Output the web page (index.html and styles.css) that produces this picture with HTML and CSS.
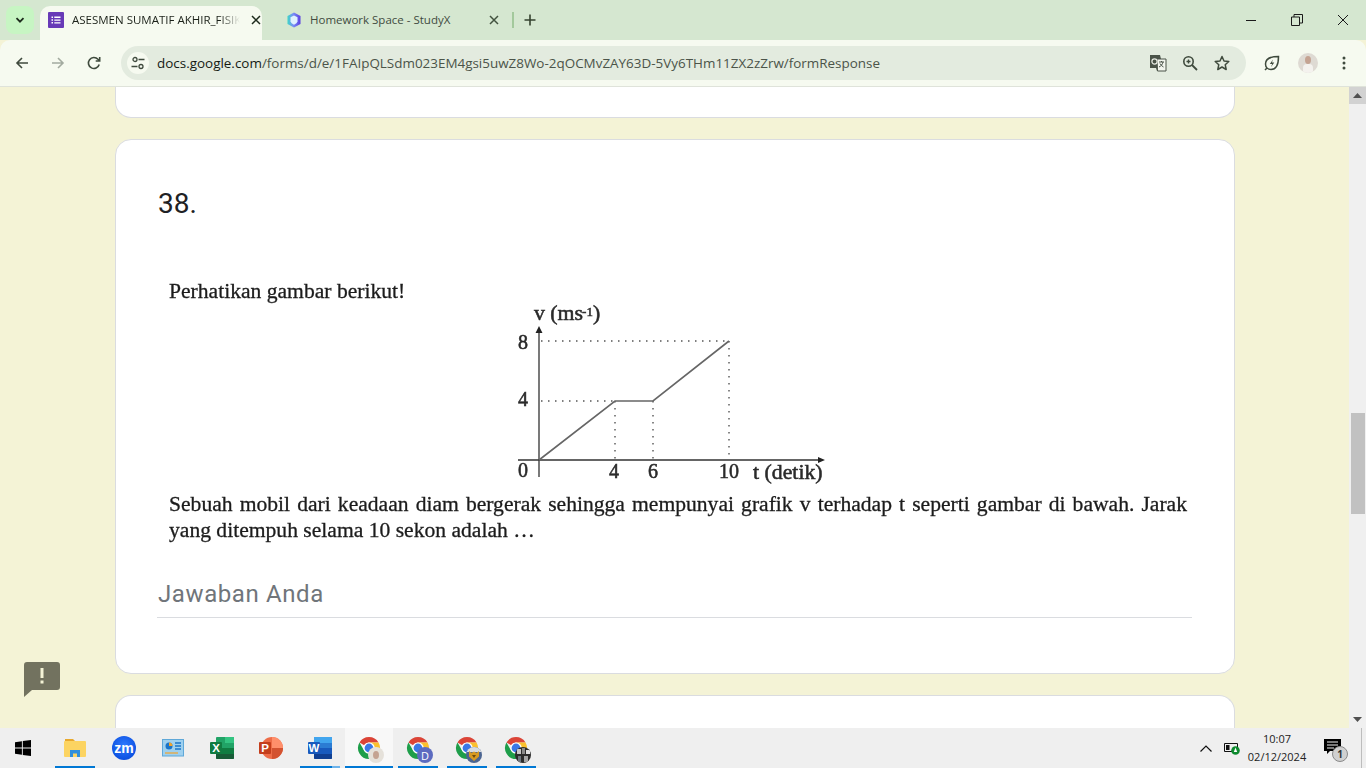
FILE: index.html
```html
<!DOCTYPE html>
<html lang="id">
<head>
<meta charset="utf-8">
<title>ASESMEN SUMATIF AKHIR_FISIKA</title>
<link rel="stylesheet" href="styles.css">
</head>
<body>
<svg class="defs" width="0" height="0">
  <symbol id="chrome" viewBox="0 0 24 24">
    <path fill="#db4437" d="M2.47 6.5A11 11 0 0 1 21.53 6.5H12A5.5 5.5 0 0 0 7.2 9.2z"/>
    <path fill="#fbc02d" d="M21.53 6.5A11 11 0 0 1 12 23L16.8 14.8A5.5 5.5 0 0 0 17.5 12 5.5 5.5 0 0 0 12 6.5z"/>
    <path fill="#1e9e4a" d="M12 23A11 11 0 0 1 2.47 6.5L7.2 14.8A5.5 5.5 0 0 0 12 17.5z"/>
    <circle cx="12" cy="12" r="5.6" fill="#fff"/>
    <circle cx="12" cy="12" r="4.4" fill="#3b78e7"/>
  </symbol>
</svg>

<header class="tabstrip">
  <button class="tab-search"><svg width="12" height="12" viewBox="0 0 12 12"><path d="M2.5 4.2 6 7.7l3.500-3.500" fill="none" stroke="#1d2a1c" stroke-width="1.800"/></svg></button>
  <div class="tab tab-active">
    <svg class="favicon" width="16" height="16" viewBox="0 0 16 16"><rect width="16" height="16" rx="1" fill="#673ab7"/><path d="M3.500 4.500h1.500v1.500H3.500zM3.500 7.300h1.500v1.500H3.500zM3.500 10.100h1.500v1.500H3.500zM6.300 4.600h6.200v1.300H6.300zM6.300 7.400h6.200v1.300H6.300zM6.300 10.200h6.200v1.300H6.300z" fill="#fff"/></svg>
    <span class="tab-title fade">ASESMEN SUMATIF AKHIR_FISIKA</span>
    <svg class="tab-close" width="10" height="10" viewBox="0 0 10 10"><path d="M1 1l8 8M9 1 1 9" stroke="#1d2a1c" stroke-width="1.500"/></svg>
  </div>
  <div class="tab tab-idle">
    <svg class="favicon" width="14" height="16" viewBox="0 0 14 16"><defs><linearGradient id="sx" x1="0" y1="0" x2="1" y2="0"><stop offset="0" stop-color="#3ed6c8"/><stop offset=".45" stop-color="#7a8cf6"/><stop offset="1" stop-color="#5a3fe0"/></linearGradient></defs><path d="M7 .5 13.500 4v8L7 15.500.5 12V4z" fill="url(#sx)"/><path d="M7 3.500 10.500 5.200v4.300Q10 11.500 7 12.700 4 11.500 3.500 9.500V5.200z" fill="#dff0ff"/></svg>
    <span class="tab-title tab-title-idle">Homework Space - StudyX</span>
    <svg class="tab-close" width="10" height="10" viewBox="0 0 10 10"><path d="M1 1l8 8M9 1 1 9" stroke="#42523f" stroke-width="1.500"/></svg>
  </div>
  <span class="tab-sep"></span>
  <button class="tab-new"><svg width="12" height="12" viewBox="0 0 12 12"><path d="M6 .5v11M.5 6h11" stroke="#35432f" stroke-width="1.600"/></svg></button>
  <div class="win-controls">
    <svg width="12" height="12" viewBox="0 0 12 12"><path d="M1 6.500h10" stroke="#1a1a1a" stroke-width="1"/></svg>
    <svg width="12" height="12" viewBox="0 0 12 12"><path d="M.5 3h8v8.500h-8zM3 3V.5h8.500V9H8.500" fill="none" stroke="#1a1a1a" stroke-width="1"/></svg>
    <svg width="12" height="12" viewBox="0 0 12 12"><path d="M1 1l10 10M11 1 1 11" stroke="#1a1a1a" stroke-width="1"/></svg>
  </div>
</header>

<nav class="toolbar">
  <svg class="tb-btn" width="16" height="16" viewBox="0 0 16 16"><path d="M14 8H3M8 3 3 8l5 5" fill="none" stroke="#3f4a3d" stroke-width="1.600"/></svg>
  <svg class="tb-btn" width="16" height="16" viewBox="0 0 16 16"><path d="M2 8h11M8 3l5 5-5 5" fill="none" stroke="#a3aba0" stroke-width="1.600"/></svg>
  <svg class="tb-btn" width="16" height="16" viewBox="0 0 16 16"><path d="M13.200 9.500A5.500 5.500 0 1 1 12 4.300L13.500 5.800M13.700 2v4h-4" fill="none" stroke="#3f4a3d" stroke-width="1.600"/></svg>
  <div class="omnibox">
    <span class="site-chip"><svg width="14" height="14" viewBox="0 0 14 14"><circle cx="4" cy="3.500" r="2" fill="none" stroke="#3f4a3d" stroke-width="1.300"/><path d="M7.500 3.500h6M.5 10.500h6" stroke="#3f4a3d" stroke-width="1.300"/><circle cx="10" cy="10.500" r="2" fill="none" stroke="#3f4a3d" stroke-width="1.300"/></svg></span>
    <span class="url"><span class="url-host">docs.google.com</span>/forms/d/e/1FAIpQLSdm023EM4gsi5uwZ8Wo-2qOCMvZAY63D-5Vy6THm11ZX2zZrw/formResponse</span>
    <svg class="omni-icon" width="18" height="18" viewBox="0 0 18 18"><path d="M1 1h10l1 4h5v12H8l-1-3H1z" fill="#4a5348"/><path d="M8 5h9v12H8.500z" fill="#f2f5ee" stroke="#4a5348"/><circle cx="5.500" cy="7.500" r="2.600" fill="none" stroke="#e7ebe2" stroke-width="1.200"/><path d="M10 8h5M12.500 7v1M14 8c-.5 2.500-2 4-4 5M11 9.500c.7 1.500 2 2.700 3.500 3.500" fill="none" stroke="#4a5348"/></svg>
    <svg class="omni-icon" width="16" height="16" viewBox="0 0 16 16"><circle cx="6.500" cy="6.500" r="4.700" fill="none" stroke="#3f4a3d" stroke-width="1.600"/><path d="M10 10l5 5" stroke="#3f4a3d" stroke-width="1.800"/><path d="M4.500 6.500h4M6.500 4.500v4" stroke="#3f4a3d" stroke-width="1.400"/></svg>
    <svg class="omni-icon omni-star" width="16" height="16" viewBox="0 0 16 16"><path d="M8 1.500 10 6l4.800.5-3.600 3.200 1 4.800L8 12l-4.200 2.500 1-4.800L1.200 6.500 6 6z" fill="none" stroke="#3f4a3d" stroke-width="1.500" stroke-linejoin="round"/></svg>
  </div>
  <svg class="tb-ext" width="16" height="16" viewBox="0 0 16 16"><path d="M14.500 1.500C8 1.500 1.500 2.500 1.500 9c0 3.500 2.500 5.500 5.500 5.500 5.500 0 7.500-6 7.500-13zM1 15l2.500-2.500" fill="none" stroke="#3f4a3d" stroke-width="1.500"/><path d="M9 4.500 5.800 9h2.400L7 12l3.300-4.500H7.900z" fill="#3f4a3d"/></svg>
  <span class="avatar"><span class="avatar-head"></span><span class="avatar-body"></span></span>
  <svg class="tb-menu" width="4" height="14" viewBox="0 0 4 14"><circle cx="2" cy="2" r="1.500" fill="#3f4a3d"/><circle cx="2" cy="7" r="1.500" fill="#3f4a3d"/><circle cx="2" cy="12" r="1.500" fill="#3f4a3d"/></svg>
</nav>

<div class="viewport">
  <main class="page">
    <section class="card card-prev"></section>
    <section class="card card-question">
      <h2 class="q-number">38.</h2>
      <div class="q-image">
        <p class="q-text q-first">Perhatikan gambar berikut!</p>
        <svg class="chart" width="340" height="192" viewBox="500 295 340 192">
          <g class="chart-dots">
            <path d="M541 341H729M729 341V460M541 401H615M615 401V460M653 401V460"/>
          </g>
          <path class="chart-axis" d="M539 330V477M518 460H820"/>
          <path class="chart-head" d="M539 326l-3.500 7h7zM825 460l-7-3v6z"/>
          <path class="chart-line" d="M539 460 615 401H653L729 341"/>
          <text class="chart-label chart-wide" x="534" y="320">v (ms<tspan class="chart-sup" dx="-1" dy="-4">-1</tspan><tspan dy="4">)</tspan></text>
          <text class="chart-label" x="518" y="349">8</text>
          <text class="chart-label" x="518" y="406">4</text>
          <text class="chart-label" x="518" y="477">0</text>
          <text class="chart-label" x="609" y="478">4</text>
          <text class="chart-label" x="648" y="478">6</text>
          <text class="chart-label" x="719" y="478">10</text>
          <text class="chart-label chart-wide" x="753" y="479">t (detik)</text>
        </svg>
        <p class="q-text q-long">Sebuah mobil dari keadaan diam bergerak sehingga mempunyai grafik v terhadap t seperti gambar di bawah. Jarak yang ditempuh selama 10 sekon adalah …</p>
      </div>
      <div class="answer"><span class="answer-text">Jawaban Anda</span></div>
    </section>
    <section class="card card-next"></section>
    <button class="feedback"><svg width="36" height="36" viewBox="0 0 36 36"><path d="M3 0H33a3 3 0 0 1 3 3V25a3 3 0 0 1-3 3H8L0 35V3a3 3 0 0 1 3-3z" fill="#72725f"/><path d="M16.500 6h3v10h-3zM16.500 18.500h3v3h-3z" fill="#f4f3d6"/></svg></button>
  </main>
  <aside class="scrollbar">
    <span class="sb-up"><svg width="9" height="5" viewBox="0 0 9 5"><path d="M4.500 0 9 5H0z" fill="#505050"/></svg></span>
    <span class="sb-thumb"></span>
    <span class="sb-down"><svg width="9" height="5" viewBox="0 0 9 5"><path d="M4.500 5 9 0H0z" fill="#505050"/></svg></span>
  </aside>
</div>

<footer class="taskbar">
  <span class="start"><svg width="16" height="16" viewBox="0 0 16 16"><path d="M0 2.200 6.900 1.200v6.400H0zM7.800 1.100 16 0v7.600H7.800zM0 8.500h6.900v6.300L0 13.800zM7.800 8.500H16V16l-8.200-1.100z" fill="#000"/></svg></span>
  <span class="task running"><svg width="22" height="20" viewBox="0 0 22 20"><path d="M1 1h8l2 2H1z" fill="#e8a92e"/><rect x="0" y="3" width="22" height="16" rx="1" fill="#fcd462"/><path d="M6 19v-7h10v7h-3v-3.500H9V19z" fill="#2f8fdc"/></svg></span>
  <span class="task"><svg width="24" height="24" viewBox="0 0 24 24"><defs><radialGradient id="zm" cx=".5" cy=".4" r=".6"><stop offset="0" stop-color="#2f7bff"/><stop offset="1" stop-color="#0b4fe0"/></radialGradient></defs><circle cx="12" cy="12" r="12" fill="url(#zm)"/><text class="zoom-mark" x="12" y="16.500" text-anchor="middle">zm</text></svg></span>
  <span class="task"><svg width="22" height="18" viewBox="0 0 22 18"><rect x=".5" y=".5" width="21" height="16.500" fill="#9ed0ef" stroke="#5fa8d8"/><circle cx="7" cy="7" r="3.500" fill="#1b74c8"/><path d="M7 7V3.500A3.500 3.500 0 0 1 10.500 7z" fill="#f3a32a"/><path d="M13 4h6M13 7h6M13 10h6" stroke="#1b74c8" stroke-width="1.400"/><path d="M3 14h13" stroke="#f3a32a" stroke-width="1.200"/></svg></span>
  <span class="task"><svg width="24" height="24" viewBox="0 0 24 24"><rect x="6" y="1" width="18" height="22" rx="1" fill="#21a366"/><path d="M15 1h8a1 1 0 0 1 1 1v5h-9z" fill="#33c481"/><path d="M6 12h18v6H6z" fill="#107c41"/><path d="M6 18h18v4a1 1 0 0 1-1 1H7a1 1 0 0 1-1-1z" fill="#185c37"/><rect x="0" y="6" width="12" height="12" rx="1" fill="#107c41"/><text class="office-mark" x="6" y="16.300" text-anchor="middle">X</text></svg></span>
  <span class="task"><svg width="24" height="24" viewBox="0 0 24 24"><circle cx="13" cy="12" r="11" fill="#ed6c47"/><path d="M13 1a11 11 0 0 1 11 11H13z" fill="#ff8f6b"/><path d="M13 12h11a11 11 0 0 1-11 11z" fill="#d35230"/><rect x="0" y="6" width="12" height="12" rx="1" fill="#c43e1c"/><text class="office-mark" x="6" y="16.300" text-anchor="middle">P</text></svg></span>
  <span class="task running word-task"><svg width="24" height="24" viewBox="0 0 24 24"><rect x="6" y="1" width="18" height="22" rx="1" fill="#2b7cd3"/><path d="M6 1h17a1 1 0 0 1 1 1v5H6z" fill="#41a5ee"/><path d="M6 12h18v6H6z" fill="#185abd"/><path d="M6 18h18v4a1 1 0 0 1-1 1H7a1 1 0 0 1-1-1z" fill="#103f91"/><rect x="0" y="6" width="12" height="12" rx="1" fill="#185abd"/><text class="office-mark" x="6" y="16.300" text-anchor="middle">W</text></svg></span>
  <span class="task chrome-task active running"><svg class="chrome-logo" width="24" height="24"><use href="#chrome"/></svg><span class="chrome-badge badge-self"><span class="badge-self-face"></span></span></span>
  <span class="task chrome-task running"><svg class="chrome-logo" width="24" height="24"><use href="#chrome"/></svg><span class="chrome-badge badge-d">D</span></span>
  <span class="task chrome-task running"><svg class="chrome-logo" width="24" height="24"><use href="#chrome"/></svg><span class="chrome-badge badge-gold"><svg width="16" height="16" viewBox="0 0 16 16"><rect width="16" height="16" fill="#4b6491"/><rect width="16" height="5" fill="#d7dbe0"/><path d="M3 4 5.500 6 8 4.500 10.500 6 13 4v5.500L8 14 3 9.500z" fill="#d69a22"/><path d="M6 8h4L8 11z" fill="#6b4a10"/></svg></span></span>
  <span class="task chrome-task running"><svg class="chrome-logo" width="24" height="24"><use href="#chrome"/></svg><span class="chrome-badge badge-dark"><svg width="16" height="16" viewBox="0 0 16 16"><rect width="16" height="16" fill="#2c2c2c"/><rect x="2" y="2" width="4" height="5" fill="#c9c9c9"/><rect x="7" y="1" width="3" height="6" fill="#8a8a8a"/><rect x="11" y="3" width="4" height="4" fill="#e2e2e2"/><rect x="3" y="9" width="3" height="6" fill="#6e7780"/><rect x="9" y="9" width="4" height="6" fill="#a5a5a5"/></svg></span></span>
  <div class="tray">
    <svg width="12" height="7" viewBox="0 0 12 7"><path d="M.5 6.500 6 1l5.500 5.500" fill="none" stroke="#111" stroke-width="1.200"/></svg>
    <svg class="tray-battery" width="16" height="14" viewBox="0 0 16 14"><path d="M.5 2.500h13v8H.5z" fill="none" stroke="#111"/><rect x="2" y="4" width="3.500" height="5" fill="#111"/><circle cx="11.500" cy="9.500" r="4.300" fill="#0d8a2e"/><path d="M11.500 6.500 9.800 11h3.400z" fill="#fff"/></svg>
    <div class="clock"><span>10:07</span><span>02/12/2024</span></div>
    <span class="notif"><svg width="17" height="15" viewBox="0 0 17 15"><path d="M0 0h17v12H6l-3 3v-3H0z" fill="#000"/><path d="M3 3h11M3 6h11M3 9h7" stroke="#f0f0f0"/></svg><span class="notif-count">1</span></span>
  </div>
  <span class="show-desktop"></span>
</footer>
</body>
</html>
```
FILE: styles.css
```css
* { box-sizing: border-box; }
html, body { margin: 0; padding: 0; }
body {
  width: 1366px;
  height: 768px;
  overflow: hidden;
  display: flex;
  flex-direction: column;
  font-family: "Open Sans", "Liberation Sans", sans-serif;
  background: #f4f3d6;
}
.defs { position: absolute; }
button { border: 0; padding: 0; background: none; display: flex; align-items: center; justify-content: center; }

/* tab strip */
.tabstrip {
  height: 40px;
  flex: none;
  background: #d5e7d0;
  display: flex;
  align-items: flex-end;
  padding-left: 6px;
}
.tab-search {
  width: 28px;
  height: 28px;
  margin-bottom: 6px;
  background: #c7f5c3;
  border-radius: 8px;
}
.tab {
  height: 34px;
  display: flex;
  align-items: center;
  padding-bottom: 6px;
}
.tab-active {
  width: 222px;
  margin-left: 6px;
  padding-left: 8px;
  padding-right: 1px;
  background: #f6faf0;
  border-radius: 10px 10px 0 0;
}
.tab-idle {
  width: 244px;
  padding-left: 25px;
  padding-right: 7px;
}
.favicon { flex: none; }
.tab-title {
  flex: 1;
  min-width: 0;
  margin-left: 8px;
  font-size: 11.500px;
  line-height: 16px;
  white-space: nowrap;
  overflow: hidden;
  color: #1b2119;
}
.tab-title-idle { margin-left: 9px; color: #414b3f; }
.fade { -webkit-mask-image: linear-gradient(to right, #000 88%, transparent); mask-image: linear-gradient(to right, #000 88%, transparent); }
.tab-close { flex: none; }
.tab-active .tab-close { margin-left: 11px; }
.tab-sep { width: 2px; height: 16px; margin: 0 0 12px 6px; background: #a3c99c; }
.tab-new { width: 12px; height: 12px; margin: 0 0 14px 10px; }
.win-controls {
  margin-left: auto;
  width: 138px;
  height: 40px;
  display: flex;
  align-items: center;
  justify-content: space-between;
  padding: 0 17px;
}

/* toolbar */
.toolbar {
  height: 47px;
  flex: none;
  display: flex;
  align-items: center;
  background: #f6faf0;
  border-bottom: 1px solid #dfe3da;
  border-radius: 10px 10px 0 0;
  padding: 0 0 1px 14px;
}
.tb-btn { flex: none; margin-right: 20px; }
.omnibox {
  width: 1125px;
  height: 34px;
  margin-left: -1px;
  display: flex;
  align-items: center;
  padding: 0 16px 0 6px;
  border-radius: 17px;
  background: #e3ebdf;
}
.site-chip {
  width: 22px;
  height: 22px;
  flex: none;
  display: flex;
  align-items: center;
  justify-content: center;
  border-radius: 50%;
  background: #f6faf0;
}
.url {
  flex: 1;
  margin-left: 8px;
  font-size: 13.440px;
  white-space: nowrap;
  color: #4b5449;
}
.url-host { color: #141a13; }
.omni-icon { flex: none; margin-left: 15px; }
.omni-star { margin-left: 16px; }
.tb-ext { flex: none; margin-left: 18px; }
.avatar {
  position: relative;
  width: 20px;
  height: 20px;
  margin-left: 18px;
  flex: none;
  overflow: hidden;
  border-radius: 50%;
  background: #dedad3;
}
.avatar-head { position: absolute; left: 7px; top: 3px; width: 6px; height: 8px; border-radius: 50%; background: #c4a392; }
.avatar-body { position: absolute; left: 5px; top: 11px; width: 10px; height: 10px; border-radius: 4px 4px 0 0; background: #f4f2ee; }
.tb-menu { flex: none; margin-left: 24px; }

/* page */
.viewport {
  flex: 1;
  min-height: 0;
  display: flex;
  overflow: hidden;
}
.page {
  position: relative;
  flex: 1;
  min-width: 0;
  overflow: hidden;
  background: #f4f3d6;
  padding-left: 115px;
}
.card {
  width: 1120px;
  background: #fff;
  border: 1px solid #dadce0;
  border-radius: 16px;
  margin-bottom: 21px;
}
.card-prev {
  height: 31px;
  border-top: 0;
  border-radius: 0 0 16px 16px;
}
.card-question {
  height: 535px;
  padding: 47px 42px 0 41px;
}
.card-next { height: 80px; border-bottom: 0; border-radius: 16px 16px 0 0; }
.q-number {
  margin: 0 0 0 1px;
  height: 34px;
  font: 400 28px/34px Roboto, sans-serif;
  color: #202124;
}
.q-image { margin-top: 57px; padding: 0 5px 0 12px; }
.q-text {
  margin: 0;
  font-family: "Liberation Serif", "Times New Roman", serif;
  font-size: 21.600px;
  line-height: 26px;
  color: #1c1c1c;
  filter: blur(.35px);
  -webkit-text-stroke: .3px #1c1c1c;
}
.q-long { text-align: justify; margin-top: 5px; line-height: 25.500px; }
.chart { display: block; margin: -9px 0 0 331px; filter: blur(.35px); }
.chart-dots path { fill: none; stroke: #555; stroke-width: 1.400; stroke-dasharray: 1.500 5.500; }
.chart-axis { fill: none; stroke: #333; stroke-width: 1.300; }
.chart-head { fill: #222; }
.chart-line { fill: none; stroke: #666; stroke-width: 1.600; }
.chart-label {
  font-family: "Liberation Serif", serif;
  font-size: 20px;
  font-weight: 400;
  fill: #2a2a2a;
  stroke: #2a2a2a;
  stroke-width: .55px;
}
.chart-wide { font-size: 21.800px; }
.chart-sup { font-size: 13px; }
.answer {
  margin-top: 36px;
  height: 39px;
  font: 400 24px/30px Roboto, sans-serif;
  color: #70757a;
  letter-spacing: .6px;
  border-bottom: 1px solid #dadce0;
}
.answer-text { margin-left: 1px; }
.feedback {
  position: absolute;
  left: 24px;
  top: 575px;
  width: 36px;
  height: 36px;
}

/* scrollbar */
.scrollbar {
  width: 17px;
  flex: none;
  display: flex;
  flex-direction: column;
  align-items: center;
  background: #f0f0f0;
}
.sb-up, .sb-down { width: 17px; height: 17px; flex: none; display: flex; align-items: center; justify-content: center; }
.sb-up { background: #d2d2d2; }
.sb-thumb { width: 14px; height: 101px; margin: 309px 0 0 1px; background: #c1c1c1; }
.sb-down { margin-top: auto; }

/* taskbar */
.taskbar {
  position: relative;
  height: 40px;
  flex: none;
  display: flex;
  align-items: stretch;
  background: #efefef;
}
.start { width: 46px; display: flex; align-items: center; justify-content: center; margin-right: 9px; }
.task {
  position: relative;
  width: 40px;
  margin-right: 9px;
  display: flex;
  align-items: center;
  justify-content: center;
}
.task.running::after {
  content: "";
  position: absolute;
  left: 0;
  right: 0;
  bottom: 0;
  height: 2px;
  background: #0078d4;
}
.task.word-task::after { background: linear-gradient(to right, #0078d4 80%, #6db3ea 80%); }
.active { width: 48px; margin: 0 5px 0 -4px; background: #f8f8f8; }
.zoom-mark { font: 700 14px "Liberation Sans", sans-serif; fill: #fff; }
.office-mark { font: 700 11.500px "Liberation Sans", sans-serif; fill: #fff; }
.chrome-logo { overflow: visible; }
.chrome-badge {
  position: absolute;
  left: 50%;
  top: 19px;
  margin-left: -1px;
  width: 16px;
  height: 16px;
  border-radius: 50%;
  display: flex;
  align-items: center;
  justify-content: center;
  overflow: hidden;
}
.badge-self { background: #e5e1da; }
.badge-self-face { width: 6px; height: 8px; border-radius: 50%; background: #c4a392; }
.badge-d { background: #5c6bc0; color: #fff; font: 400 11px "Open Sans", sans-serif; }
.tray {
  position: absolute;
  left: 1200px;
  top: 0;
  bottom: 0;
  display: flex;
  align-items: center;
}
.tray-battery { margin-left: 12px; }
.clock {
  width: 62px;
  margin-left: 6px;
  display: flex;
  flex-direction: column;
  align-items: center;
  font-size: 11px;
  line-height: 18px;
  color: #222;
}
.notif { position: relative; margin-left: 16px; display: flex; margin-top: -3px; }
.notif-count {
  position: absolute;
  left: 8px;
  top: 7px;
  width: 16px;
  height: 16px;
  border-radius: 50%;
  background: #d0d0d0;
  border: 1px solid #8a8a8a;
  font-size: 10px;
  font-weight: 700;
  line-height: 14px;
  text-align: center;
  color: #333;
}
.show-desktop { position: absolute; left: 1361px; top: 0; bottom: 0; width: 1px; background: #bdbdbd; }
```
